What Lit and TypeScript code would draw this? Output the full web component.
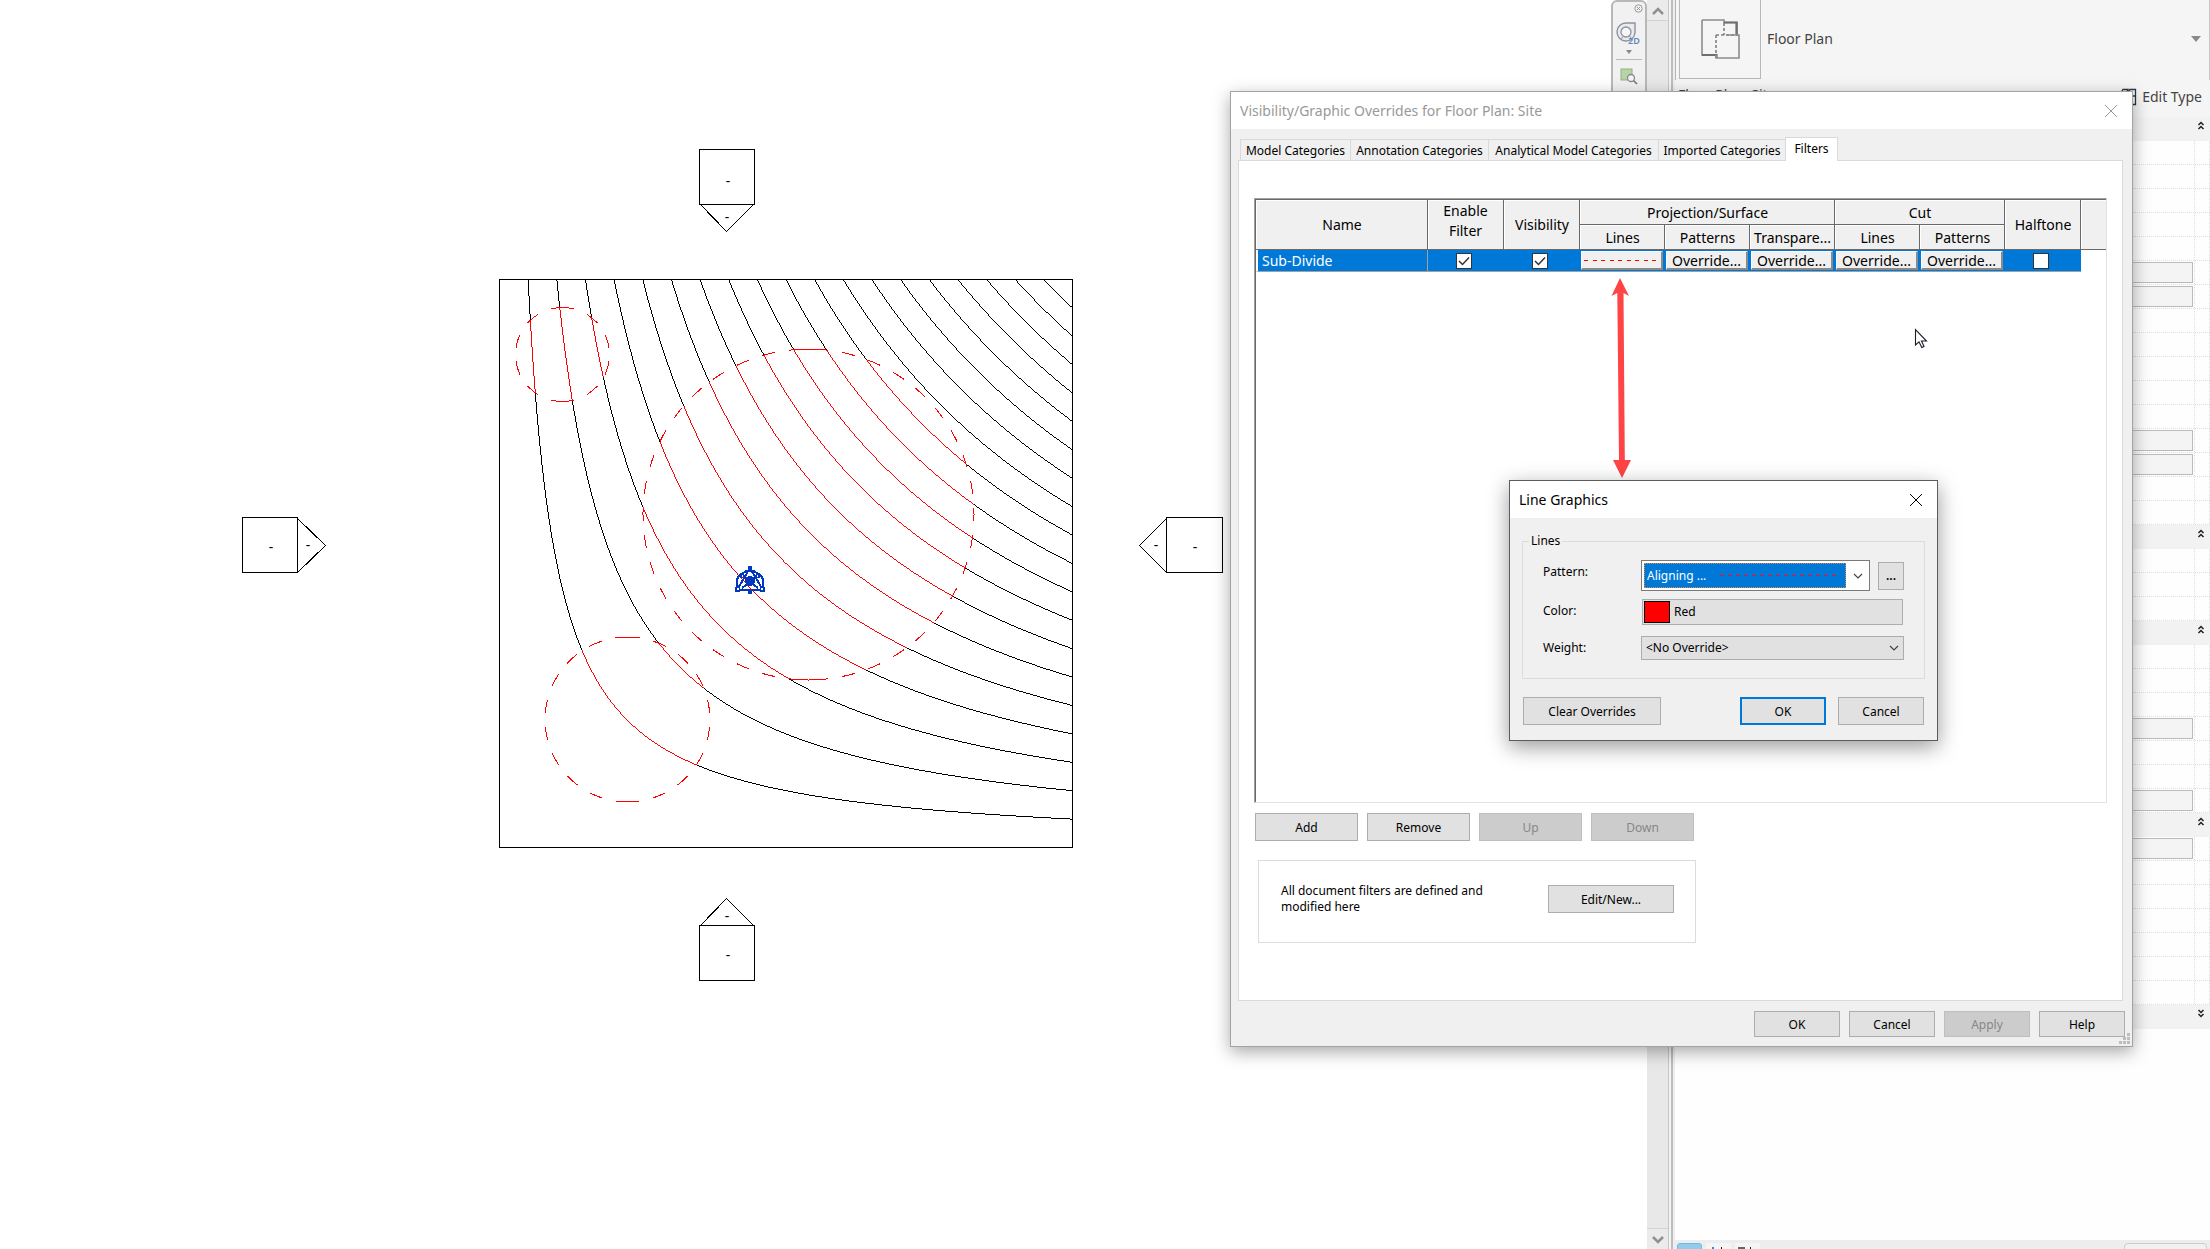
import { LitElement, html, svg, css, nothing } from "lit";
import { customElement, property } from "lit/decorators.js";

const controls = css`
  * { box-sizing: border-box; }
  button {
    font: 12px/16px "Noto Sans", "Open Sans", sans-serif;
    color: #000;
    background: #e1e1e1;
    border: 1px solid #adadad;
    border-radius: 0;
    padding: 1px 0 0;
    margin: 0;
  }
  button:disabled { color: #878787; background: #ccc; border-color: #bfbfbf; }
  select {
    font: 12px/16px "Noto Sans", "Open Sans", sans-serif;
    appearance: none;
    border-radius: 0;
    margin: 0;
    outline: none;
  }
  svg { display: block; }
`;

/* ---------- Site plan ---------- */

const SITE = { x: 499, y: 279, w: 573, h: 568 };
const LEVELS = 20;

interface Region { cx: number; cy: number; r: number; end: number; dash: number; count: number; }
const REGIONS: Region[] = [
  { cx: 562.5, cy: 354.5, r: 47, end: 12, dash: 13.5, count: 4 },
  { cx: 808.5, cy: 514.5, r: 165.5, end: 19.5, dash: 13, count: 17 },
  { cx: 627.5, cy: 719.5, r: 82.5, end: 12.5, dash: 13.5, count: 8 },
];

/* Elevation is u * w, so each contour is a hyperbola. It is plotted one pixel
   per row while steep and one pixel per column while shallow. */
function contour(k: number): string {
  const level = k / LEVELS;
  const turn = Math.sqrt((level * SITE.h) / SITE.w);
  let d = "";
  const yTurn = SITE.y + Math.round((1 - level / turn) * SITE.h);
  for (let y = SITE.y; y <= yTurn; y++) {
    const w = 1 - (y - SITE.y) / SITE.h;
    const x = SITE.x + Math.round((level / w) * SITE.w);
    d += `M${x} ${y}h1v1h-1z`;
  }
  for (let x = SITE.x + Math.round(turn * SITE.w); x <= SITE.x + SITE.w; x++) {
    const u = (x - SITE.x) / SITE.w;
    const y = SITE.y + Math.round((1 - level / u) * SITE.h);
    d += `M${x} ${y}h1v1h-1z`;
  }
  return d;
}

function dashes(c: Region): string {
  const half = Math.PI * c.r;
  const gap = (half - 2 * c.end - c.count * c.dash) / (c.count + 1);
  const list = [c.end];
  for (let i = 0; i < c.count; i++) list.push(gap, c.dash);
  list.push(gap, c.end + 1, 0);
  return list.map((n) => n.toFixed(2)).join(" ");
}

@customElement("site-plan")
export class SitePlan extends LitElement {
  static styles = css`
    :host { display: block; }
    svg { display: block; width: 100%; height: 100%; }
    .line { fill: none; stroke: #000; stroke-width: 1; }
    .red { fill: none; stroke: #f00; stroke-width: 1; }
    .mark { font: 14px "Noto Sans", sans-serif; text-anchor: middle; fill: #000; }
    .survey { fill: none; stroke: #0038c0; stroke-width: 2; }
    .node { fill: #0038c0; }
  `;

  private arcs(c: Region) {
    const top = `M${c.cx} ${c.cy - c.r}`;
    const end = `${c.cx} ${c.cy + c.r}`;
    return [0, 1].map(
      (sweep) => svg`<path class="red" stroke-dasharray=${dashes(c)} d=${`${top}A${c.r} ${c.r} 0 0 ${sweep} ${end}`} />`
    );
  }

  render() {
    const lines = Array.from({ length: LEVELS - 1 }, (_, i) => contour(i + 1)).join("");
    return html`<svg shape-rendering="crispEdges" aria-label="Site plan">
      <defs>
        <clipPath id="regions">
          ${REGIONS.map((c) => svg`<circle cx=${c.cx} cy=${c.cy} r=${c.r} />`)}
        </clipPath>
      </defs>
      <path d=${lines} fill="#000" />
      <g clip-path="url(#regions)">
        ${REGIONS.map((c) => svg`<circle cx=${c.cx} cy=${c.cy} r=${c.r} fill="#fff" />`)}
        <path d=${lines} fill="#f00" />
      </g>
      ${REGIONS.map((c) => this.arcs(c))}
      <rect class="line" x=${SITE.x + 0.5} y=${SITE.y + 0.5} width=${SITE.w} height=${SITE.h} />

      <path class="line" d="M699.5 149.5h55v55h-55zM700.5 204.5L726.5 231.5L753.5 204.5" />
      <path class="line" d="M699.5 925.5h55v55h-55zM700.5 925.5L726.5 898.5L753.5 925.5" />
      <path class="line" d="M242.5 517.5h55v55h-55zM297.5 518.5L325.5 545.5L297.5 572.5" />
      <path class="line" d="M1166.5 517.5h56v55h-56zM1166.5 518.5L1139.5 545.5L1166.5 572.5" />
      <text class="mark" x="728" y="186">-</text>
      <text class="mark" x="727" y="222">-</text>
      <text class="mark" x="728" y="960">-</text>
      <text class="mark" x="727" y="921">-</text>
      <text class="mark" x="271" y="552">-</text>
      <text class="mark" x="308" y="550">-</text>
      <text class="mark" x="1195" y="552">-</text>
      <text class="mark" x="1156" y="550">-</text>

      <g>
        <path class="survey" d="M750 568L737 590H763Z" />
        <path class="survey" d="M739 590A11 11 0 0 1 743 573A11 11 0 0 1 757 573A11 11 0 0 1 761 590" />
        <path class="survey" d="M742 576L758 588M758 576L742 588" />
        <circle class="node" cx="750" cy="581" r="5" />
        <path class="node" d="M748 566h4v4h-4zM735 587h5v5h-5zM760 587h5v5h-5zM748 590h4v4h-4zM740 574h4v4h-4zM756 574h4v4h-4z" />
        <path fill="#fff" d="M737 588h2v2h-2zM761 588h2v2h-2zM742 575h1v2h-1zM757 575h1v2h-1z" />
        <path stroke="#f00" d="M743 577l2 2M750 588l2 2" />
      </g>
    </svg>`;
  }
}

/* ---------- Navigation bar over the view ---------- */

@customElement("nav-bar")
export class NavBar extends LitElement {
  static styles = [controls, css`
    :host { display: block; }
    .bar {
      display: flex; flex-direction: column; align-items: center;
      height: 140px; padding-top: 2px;
      background: #f1f1f1; border: 2px solid #b8b8b8; border-radius: 6px;
    }
    button { background: none; border: none; display: block; padding: 0; }
    .close { align-self: flex-end; margin-right: 2px; }
    .wheel { margin-top: 9px; }
    .more { margin: 2px 0 5px; }
    .sep { width: 26px; height: 1px; background: #b8b8b8; margin-bottom: 8px; }
  `];
  render() {
    return html`<div class="bar">
      <button class="close" aria-label="Close navigation bar">
        <svg width="9" height="9" viewBox="0 0 9 9" fill="none" stroke="#9a9a9a"><circle cx="4.5" cy="4.5" r="3.7" /><path d="M3 3l3 3M6 3l-3 3" /></svg>
      </button>
      <button class="wheel" aria-label="2D steering wheel">
        <svg width="30" height="26" viewBox="-2 0 30 26" fill="none" overflow="visible">
          <path d="M10 1H19V10.500A9 9 0 1 1 10 1Z" fill="#e9ebee" stroke="#8d949c" stroke-width="1.400" />
          <circle cx="10" cy="10" r="5" fill="#f6f6f6" stroke="#8d949c" stroke-width="1.300" />
          <path d="M6.500 15L5 18M13.500 14L15 16" stroke="#8d949c" />
          <text x="12" y="22" font-family="Noto Sans, sans-serif" font-size="9" font-weight="600" fill="#5b87bb">2D</text>
        </svg>
      </button>
      <button class="more" aria-label="More wheels">
        <svg width="6" height="4" viewBox="0 0 6 4"><path d="M0 0H6L3 4Z" fill="#888" /></svg>
      </button>
      <div class="sep"></div>
      <button aria-label="Zoom in region">
        <svg width="18" height="17" viewBox="0 0 18 17" fill="none">
          <rect x="1" y="1" width="11" height="11" fill="#b7d3a8" stroke="#8fb57c" />
          <circle cx="11" cy="10" r="3.500" fill="#f4f4f4" stroke="#8a8a8a" stroke-width="1.300" />
          <path d="M13.500 12.500L17 16" stroke="#777" stroke-width="1.600" />
        </svg>
      </button>
    </div>`;
  }
}

/* ---------- Properties palette ---------- */

type Row = "open" | "closed" | "field" | "plain";
const OPEN = [0, 17, 21, 29];
const FIELDS = [6, 7, 13, 14, 25, 28, 30];
const ROWS: Row[] = Array.from({ length: 38 }, (_, i) =>
  i === 37 ? "closed" : OPEN.includes(i) ? "open" : FIELDS.includes(i) ? "field" : "plain"
);

@customElement("properties-palette")
export class PropertiesPalette extends LitElement {
  static styles = [controls, css`
    :host {
      display: flex; flex-direction: column;
      font: 14px/20px "Noto Sans", "Open Sans", sans-serif;
      color: #444; background: #fefefe; border-left: 2px solid #eee;
    }
    .type {
      display: flex; align-items: flex-start; height: 80px;
      background: #f5f5f5; border-left: 1px solid #b5b5b5; border-right: 1px solid #c8c8c8;
      padding-left: 3px;
    }
    .thumb {
      display: flex; align-items: center; justify-content: center;
      width: 82px; height: 79px; border: 1px solid #b8b8b8; border-top: none;
    }
    .family { flex: 1; padding: 29px 6px; }
    .drop { background: none; border: none; margin: 35px 8px 0 0; }
    .instance { display: flex; height: 37px; padding: 5px 8px 0 3px; background: #f5f5f5; justify-content: space-between; }
    .edit {
      display: flex; align-items: center; gap: 5px; height: 20px; margin-top: 1px;
      font-size: 14px; line-height: 20px; color: #444; background: none; border: none;
    }
    .row {
      display: grid; grid-template-columns: 1fr 1fr 15px; height: 24px;
      border-bottom: 1px dotted #dedede;
    }
    .cell { border-right: 1px dotted #dedede; padding: 1px 1px 0 0; }
    .band {
      display: flex; justify-content: flex-end; height: 24px;
      background: #f2f2f2; padding: 3px 5px 0 0;
    }
    .band button { background: none; border: none; height: 10px; padding: 0; }
    .field { display: block; width: 100%; height: 21px; background: #f4f4f4; border: 1px solid #bbb; }
    .fill { flex: 1; }
    .tabs {
      display: flex; gap: 4px; height: 9px; overflow: hidden;
      padding: 3px 3px 0 2px; background: #ededed;
    }
    .tab { width: 25px; height: 12px; background: #f5f5f5; }
    .on { background: #93cdec; border: 1px solid #6bbbe3; border-radius: 3px; }
    .box { width: 83px; height: 12px; margin-left: auto; border: 1px solid #ccc; border-radius: 4px; background: #f1f1f1; }
  `];

  private row(kind: Row) {
    if (kind === "open" || kind === "closed") {
      const d = kind === "open" ? "M1 4L3.500 1.500L6 4M1 8L3.500 5.500L6 8" : "M1 1L3.500 3.500L6 1M1 5L3.500 7.500L6 5";
      return html`<div class="band"><button aria-label="Toggle group">
        <svg width="8" height="9" viewBox="0 0 7 9" fill="none" stroke="#222" stroke-width="1.500"><path d=${d} /></svg>
      </button></div>`;
    }
    return html`<div class="row">
      <div class="cell"></div>
      <div class="cell">${kind === "field" ? html`<button class="field" aria-label="Edit value"></button>` : nothing}</div>
      <div class="cell"></div>
    </div>`;
  }

  render() {
    return html`
      <div class="type">
        <div class="thumb">
          <svg width="40" height="40" viewBox="0 0 40 40" fill="none">
            <path d="M2 1H24V3.500H37V16.500M2 1V36H16" stroke="#8c8c8c" stroke-width="1.600" />
            <path d="M24 3.500H36.500V16M2 36H16.500V39" stroke="#6e6e6e" stroke-width="2.200" />
            <path d="M24 4V16M16 16V36M16 16H38" stroke="#808080" stroke-width="1.600" stroke-dasharray="3 2" />
            <path d="M26 16H39V39H16V36" stroke="#8c8c8c" stroke-width="1.600" />
          </svg>
        </div>
        <div class="family">Floor Plan</div>
        <button class="drop" aria-label="Change type">
          <svg width="10" height="6" viewBox="0 0 10 6"><path d="M0 0H10L5 6Z" fill="#8a8a8a" /></svg>
        </button>
      </div>
      <div class="instance">
        <div>Floor Plan: Site</div>
        <button class="edit">
          <svg width="18" height="18" viewBox="0 0 18 18" fill="none" stroke="#2b3540" stroke-width="1.300">
            <path d="M1 6L4 1.500H9L6.500 6ZM9 4L11 1.500H16.500V16.500H8V8H16" />
            <path d="M11 10.500H14M11 13.500H14" stroke="#2a6fc0" stroke-width="2" />
          </svg>
          Edit Type
        </button>
      </div>
      ${ROWS.map((r) => this.row(r))}
      <div class="fill"></div>
      <div class="tabs">
        <div class="tab on"></div>
        <div class="tab"><svg width="25" height="6"><path d="M6 4h2v2h-2z" fill="#2a8fe0" /><path d="M15 4h1v2h-1z" fill="#222" /></svg></div>
        <div class="tab"><svg width="25" height="6"><path d="M3 4h7v2h-7z" fill="#666" /><path d="M15 4h1v2h-1z" fill="#222" /></svg></div>
        <div class="box"></div>
      </div>`;
  }
}

/* ---------- Window frame ---------- */

@customElement("app-window")
export class AppWindow extends LitElement {
  @property() heading = "";
  @property({ type: Boolean, reflect: true }) active = false;
  static styles = [controls, css`
    :host {
      display: block; box-sizing: border-box;
      background: #f0f0f0; border: 1px solid #a3a3a3;
      box-shadow: 0 5px 16px rgba(0, 0, 0, 0.34);
    }
    :host([active]) { border-color: #5c5c5c; box-shadow: 0 6px 20px rgba(0, 0, 0, 0.4); }
    .bar {
      display: flex; align-items: center; justify-content: space-between;
      height: 37px; padding: 0 14px 0 9px; background: #fff; color: #999;
      font: 14px/20px "Noto Sans", "Open Sans", sans-serif;
    }
    :host([active]) .bar { color: #000; }
    .close { background: none; border: none; color: inherit; padding: 0; }
  `];
  render() {
    return html`<div class="bar">
        <span>${this.heading}</span>
        <button class="close" aria-label="Close">
          <svg width="14" height="14" viewBox="0 0 14 14" stroke="currentColor"><path d="M1 1L13 13M13 1L1 13" /></svg>
        </button>
      </div>
      <slot></slot>`;
  }
}

/* ---------- Visibility / Graphic Overrides ---------- */

@customElement("overrides-dialog")
export class OverridesDialog extends LitElement {
  static styles = [controls, css`
    :host { display: block; font: 12px/16px "Noto Sans", "Open Sans", sans-serif; color: #000; }
    .body { padding: 8px 9px 9px 7px; }
    .tablist {
      display: grid; grid-template-columns: 110px 138px 170px 127px 53px;
      align-items: end; height: 23px; padding-left: 2px;
    }
    .tab { height: 21px; padding-top: 2px; background: #f0f0f0; border: 1px solid #dadada; border-right: none; border-bottom: none; }
    .tab.current { height: 24px; margin-bottom: -1px; padding: 0 0 2px; background: #fff; border-right: 1px solid #dadada; position: relative; }
    .panel { background: #fff; border: 1px solid #dadada; padding: 37px 15px 57px; }
    .list {
      height: 605px; border: 1px solid #e3e3e3; border-top-color: #a0a0a0; border-left-color: #a0a0a0;
    }
    .frame { height: 100%; border-top: 1px solid #696969; border-left: 1px solid #696969; }
    table {
      width: 100%; table-layout: fixed; border-collapse: separate; border-spacing: 0;
      font-size: 14px; line-height: 20px;
    }
    th {
      font-weight: normal; padding: 0; height: 25px; background: #f0f0f0; text-align: center;
      border-right: 1px solid #696969; border-bottom: 1px solid #696969;
      box-shadow: inset 1px 1px #fff; white-space: nowrap; padding: 1px 0 0 1px;
    }
    th.two { white-space: normal; padding: 0 12px 8px; }
    th.rest { border-right: none; }
    td { height: 22px; padding: 0; background: #0078d7; border-bottom: 1px solid #a0a0a0; text-align: center; }
    td.name { color: #fff; text-align: left; padding-left: 4px; border-left: 2px solid #fff; border-right: 1px solid #a0a0a0; }
    td.rest { background: #fff; border-bottom: none; }
    td.check { padding-right: 4px; }
    .cellbtn {
      display: flex; align-items: center; justify-content: center;
      width: 82px; height: 19px; margin: 0 0 0 1px;
      font-size: 14px; line-height: 16px; background: #f0f0f0;
      border: 1px solid #fff; border-right: 2px solid #8a8a8a; border-bottom: 2px solid #8a8a8a;
    }
    .tick {
      appearance: none; display: block; width: 16px; height: 16px; margin: 0 auto;
      background: #fff; border: 1px solid #333;
    }
    .tick:checked {
      background: #fff url('data:image/svg+xml,<svg xmlns="http://www.w3.org/2000/svg" viewBox="0 0 14 14"><path d="M2 7L5.500 10.500L12 3.500" fill="none" stroke="%23333" stroke-width="1.500"/></svg>') center / 14px 14px;
    }
    .actions { display: grid; grid-template-columns: repeat(4, 103px); gap: 9px; margin: 10px 0 19px 1px; }
    .actions button, .edit { height: 28px; }
    .note {
      display: flex; align-items: flex-start; justify-content: space-between;
      width: 438px; height: 83px; margin-left: 4px; padding: 24px 21px 0 22px; border: 1px solid #dcdcdc;
    }
    .note p { width: 230px; margin: -2px 0 0; }
    .edit { width: 126px; }
    .foot { display: grid; grid-template-columns: repeat(4, 86px); gap: 9px; justify-content: end; padding-top: 10px; margin-right: -2px; }
    .foot button { height: 26px; }
    .grip { position: absolute; right: 3px; bottom: 3px; }
  `];

  render() {
    const override = html`<td><button class="cellbtn">Override...</button></td>`;
    return html`<app-window heading="Visibility/Graphic Overrides for Floor Plan: Site">
      <div class="body">
        <div class="tablist" role="tablist">
          ${["Model Categories", "Annotation Categories", "Analytical Model Categories", "Imported Categories"].map(
            (t) => html`<button class="tab" role="tab">${t}</button>`
          )}
          <button class="tab current" role="tab" aria-selected="true">Filters</button>
        </div>
        <div class="panel">
          <div class="list"><div class="frame">
            <table>
              <colgroup>
                <col style="width:172px" /><col style="width:76px" /><col style="width:76px" />
                ${[1, 2, 3, 4, 5].map(() => html`<col style="width:85px" />`)}
                <col style="width:76px" /><col />
              </colgroup>
              <thead>
                <tr>
                  <th rowspan="2">Name</th><th rowspan="2" class="two">Enable Filter</th><th rowspan="2">Visibility</th>
                  <th colspan="3">Projection/Surface</th><th colspan="2">Cut</th>
                  <th rowspan="2">Halftone</th><th rowspan="2" class="rest"></th>
                </tr>
                <tr><th>Lines</th><th>Patterns</th><th>Transpare...</th><th>Lines</th><th>Patterns</th></tr>
              </thead>
              <tbody>
                <tr>
                  <td class="name">Sub-Divide</td>
                  <td class="check"><input class="tick" type="checkbox" aria-label="Enable filter" checked /></td>
                  <td class="check"><input class="tick" type="checkbox" aria-label="Visibility" checked /></td>
                  <td><button class="cellbtn" aria-label="Line override">
                    <svg width="77" height="3" shape-rendering="crispEdges"><path d="M1 1.500H77" stroke="#f00" stroke-dasharray="4 5 4 4" /></svg>
                  </button></td>
                  ${override}${override}${override}${override}
                  <td class="check"><input class="tick" type="checkbox" aria-label="Halftone" /></td>
                  <td class="rest"></td>
                </tr>
              </tbody>
            </table>
          </div></div>
          <div class="actions">
            <button>Add</button><button>Remove</button><button disabled>Up</button><button disabled>Down</button>
          </div>
          <div class="note">
            <p>All document filters are defined and modified here</p>
            <button class="edit">Edit/New...</button>
          </div>
        </div>
        <div class="foot">
          <button>OK</button><button>Cancel</button><button disabled>Apply</button><button>Help</button>
        </div>
      </div>
      <svg class="grip" width="11" height="11" fill="#bdbdbd"><path d="M8 0h3v3h-3zM4 4h3v3h-3zM8 4h3v3h-3zM0 8h3v3h-3zM4 8h3v3h-3zM8 8h3v3h-3z" /></svg>
    </app-window>`;
  }
}

/* ---------- Line Graphics ---------- */

@customElement("line-graphics-dialog")
export class LineGraphicsDialog extends LitElement {
  static styles = [controls, css`
    :host { display: block; font: 12px/16px "Noto Sans", "Open Sans", sans-serif; color: #000; }
    .body { padding: 15px 12px 15px; }
    fieldset { margin: 0; padding: 11px 20px 18px; border: 1px solid #dcdcdc; min-width: 0; }
    legend { margin-left: -14px; padding: 0 2px; line-height: 16px; }
    .form { display: grid; grid-template-columns: 98px 1fr; grid-template-rows: 39px 37px 24px; align-items: start; }
    label { line-height: 24px; }
    .pair { display: flex; gap: 8px; align-items: center; }
    .combo { position: relative; display: flex; align-items: center; flex: 1; height: 31px; padding: 2px; background: #fff; border: 1px solid #7a7a7a; }
    .combo select { width: 202px; height: 25px; padding: 0 2px; color: #fff; background: #0078d7; border: 1px dotted #e08a3a; }
    .sample { position: absolute; left: 78px; top: 14px; }
    .combo .chev { margin-left: 7px; }
    .dots { width: 26px; height: 28px; font-weight: 600; }
    .color { display: flex; align-items: center; gap: 4px; height: 26px; padding: 0 0 0 1px; margin: 0 1px; }
    .swatch { width: 26px; height: 22px; background: #f00; border: 1px solid #000; }
    .weight { position: relative; }
    .weight select { width: 100%; height: 24px; padding: 0 4px; background: #e1e1e1; border: 1px solid #adadad; color: #000; display: block; }
    .weight .chev { position: absolute; right: 5px; top: 9px; }
    .chev, .sample { pointer-events: none; }
    .foot { display: grid; grid-template-columns: 138px 1fr 86px 86px; column-gap: 12px; padding: 18px 1px 0; }
    .foot button { height: 28px; }
    .foot .ok { grid-column: 3; border: 2px solid #0078d7; }
  `];

  private chevron() {
    return html`<svg class="chev" width="10" height="6" viewBox="0 0 10 6" fill="none" stroke="#444" stroke-width="1.200"><path d="M1 1L5 5L9 1" /></svg>`;
  }

  render() {
    return html`<app-window active heading="Line Graphics">
      <div class="body">
        <fieldset>
          <legend>Lines</legend>
          <div class="form">
            <label for="pattern">Pattern:</label>
            <div class="pair">
              <div class="combo">
                <select id="pattern"><option>Aligning ...</option></select>
                <svg class="sample" width="118" height="2" shape-rendering="crispEdges"><path d="M0 .5H118" stroke="#f0141e" stroke-dasharray="4 4" /></svg>
                ${this.chevron()}
              </div>
              <button class="dots" aria-label="Edit line patterns">...</button>
            </div>
            <label for="color">Color:</label>
            <button id="color" class="color"><span class="swatch"></span>Red</button>
            <label for="weight">Weight:</label>
            <div class="weight">
              <select id="weight"><option>&lt;No Override&gt;</option></select>
              ${this.chevron()}
            </div>
          </div>
        </fieldset>
        <div class="foot">
          <button>Clear Overrides</button><button class="ok">OK</button><button>Cancel</button>
        </div>
      </div>
    </app-window>`;
  }
}

/* ---------- Application ---------- */

@customElement("app-root")
export class AppRoot extends LitElement {
  static styles = [controls, css`
    :host { display: block; position: relative; height: 100vh; overflow: hidden; background: #fff; }
    .shell { display: flex; height: 100%; }
    .view { position: relative; flex: 1; min-width: 0; }
    site-plan { height: 100%; }
    nav-bar { position: absolute; right: 0; top: 0; width: 36px; }
    .scroll {
      display: flex; flex-direction: column; justify-content: space-between;
      width: 22px; background: #e8e8e8; border-right: 1px solid #c6c6c6;
    }
    .scroll button { display: flex; align-items: center; justify-content: center; height: 21px; background: #ebebeb; border: none; }
    .scroll .up { border-bottom: 1px solid #d2d2d2; }
    .scroll .down { border-top: 1px solid #d2d2d2; }
    .split { width: 4px; background: #f4f4f4; border-right: 2px solid #bdbdbd; }
    properties-palette { width: 537px; }
    overrides-dialog { position: absolute; left: 1230px; top: 91px; width: 903px; }
    line-graphics-dialog { position: absolute; left: 1509px; top: 480px; width: 429px; }
    .arrow { position: absolute; left: 1610px; top: 276px; }
    .cursor { position: absolute; left: 1914px; top: 328px; }
  `];

  render() {
    return html`
      <div class="shell">
        <div class="view"><site-plan></site-plan><nav-bar></nav-bar></div>
        <div class="scroll">
          <button class="up" aria-label="Scroll up"><svg width="12" height="8" fill="none" stroke="#909090" stroke-width="2.500"><path d="M1 7L6 2L11 7" /></svg></button>
          <button class="down" aria-label="Scroll down"><svg width="12" height="8" fill="none" stroke="#909090" stroke-width="2.500"><path d="M1 1L6 6L11 1" /></svg></button>
        </div>
        <div class="split"></div>
        <properties-palette></properties-palette>
      </div>
      <overrides-dialog></overrides-dialog>
      <svg class="arrow" width="24" height="204" fill="#fe4444">
        <path d="M10 2L19 20L13.500 17L14.800 184H21L12 202L3 184H9L7.300 17L1.500 20Z" />
      </svg>
      <svg class="cursor" width="14" height="21" viewBox="0 0 14 21">
        <path d="M1.500 1.500V17L5 13.800L7.800 19.500L10 18.500L7.500 13H12.500Z" fill="#fff" stroke="#1c1c28" stroke-width="1.100" />
      </svg>
      <line-graphics-dialog></line-graphics-dialog>`;
  }
}
